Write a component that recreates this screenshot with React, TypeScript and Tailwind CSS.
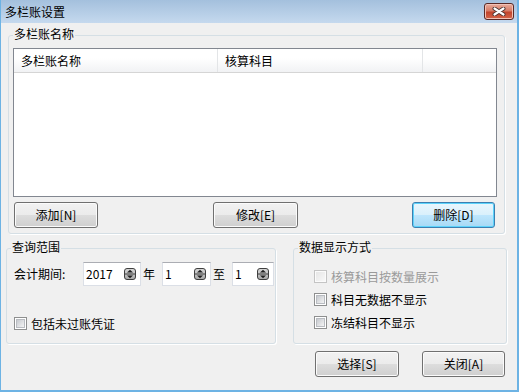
import React from "react"

const font = "font-['Noto_Sans_CJK_SC','Microsoft_YaHei',sans-serif]"

function Group({ title, className, children }: { title: string; className: string; children?: React.ReactNode }) {
  return (
    <div className={`relative box-border rounded-[3px] border border-[#d5dfe5] shadow-[1px_1px_0_#ffffff] ${className}`}>
      <span className="absolute left-[4px] top-[-10px] bg-[#f0f0f0] px-[1px] text-[12px] leading-[16px] text-black">
        {title}
      </span>
      {children}
    </div>
  )
}

function Button({ label, primary, className }: { label: string; primary?: boolean; className?: string }) {
  return (
    <button
      className={`box-border flex h-[26px] items-center justify-center rounded-[3px] border text-[12px] leading-none text-black ${
        primary
          ? "border-[#3c7fb1] bg-[linear-gradient(#eaf6fd_0%,#d9f0fc_50%,#bee6fd_50%,#a7d9f5_100%)] shadow-[inset_0_0_0_1px_#5cd3fb]"
          : "border-[#707070] bg-[linear-gradient(#f2f2f2_0%,#ebebeb_50%,#dddddd_50%,#cfcfcf_100%)] shadow-[inset_0_0_0_1px_#fbfbfb]"
      } ${className ?? ""}`}
    >
      {label}
    </button>
  )
}

function Check({ label, disabled }: { label: string; disabled?: boolean }) {
  return (
    <div className="flex h-[13px] items-center">
      <span
        className={`box-border flex h-[13px] w-[13px] items-center justify-center border ${
          disabled ? "border-[#c4c4c4] bg-[#fbfbfb]" : "border-[#8e8f8f] bg-white"
        }`}
      >
        <span
          className={`h-[9px] w-[9px] ${
            disabled
              ? "bg-[linear-gradient(135deg,#e6e6e6,#f8f8f8)]"
              : "bg-[linear-gradient(135deg,#c6c9ce,#f4f4f4)] border border-[#b9bcc1]"
          }`}
        />
      </span>
      <span className={`ml-[4px] text-[12px] leading-[16px] ${disabled ? "text-[#9a9a9a]" : "text-black"}`}>{label}</span>
    </div>
  )
}

function Spinner() {
  return (
    <svg width="12" height="12" viewBox="0 0 12 12">
      <defs>
        <linearGradient id="spin" x1="0" y1="0" x2="0" y2="1">
          <stop offset="0" stopColor="#d8d8d8" />
          <stop offset="1" stopColor="#a9a9a9" />
        </linearGradient>
      </defs>
      <rect x="0.5" y="0.5" width="11" height="11" rx="2.5" fill="url(#spin)" stroke="#3f3f3f" />
      <line x1="1" y1="6" x2="11" y2="6" stroke="#3f3f3f" />
      <polygon points="3,4.5 6,1.8 9,4.5" fill="#1e1e1e" />
      <polygon points="3,7.5 6,10.2 9,7.5" fill="#1e1e1e" />
    </svg>
  )
}

function SpinBox({ value, width }: { value: string; width: string }) {
  return (
    <div
      className={`box-border flex h-[24px] items-center justify-between border border-[#dbdfe6] border-t-[#abadb3] bg-white pl-[2px] pr-[4px] ${width}`}
    >
      <span className="text-[12px] leading-none text-black">{value}</span>
      <Spinner />
    </div>
  )
}

export default function App() {
  return (
    <div
      className={`box-border flex h-[392px] w-[519px] flex-col overflow-hidden border-b-2 border-l border-r-2 border-[#6db3e4] bg-[#f0f0f0] ${font}`}
    >
      {/* Title bar */}
      <div className="flex h-[23px] shrink-0 items-center justify-between bg-[linear-gradient(#a4c0dd,#c5d9ee)] pl-[4px] pr-[3px]">
        <span className="text-[12px] leading-none text-black">多栏账设置</span>
        <div className="flex h-[17px] w-[30px] items-center justify-center rounded-[3px] border border-[#5a2a26] bg-[linear-gradient(#e8ac9d_0%,#d77c66_45%,#c2452d_55%,#d4664a_100%)] shadow-[inset_0_0_0_1px_#f2c2b6]">
          <svg width="14" height="9" viewBox="0 0 14 9">
            <path d="M2.5 1.5 L11.5 7.5 M11.5 1.5 L2.5 7.5" stroke="#4a3330" strokeWidth="4" strokeLinecap="round" />
            <path d="M2.5 1.5 L11.5 7.5 M11.5 1.5 L2.5 7.5" stroke="#ffffff" strokeWidth="2.2" strokeLinecap="round" />
          </svg>
        </div>
      </div>

      {/* 多栏账名称 */}
      <Group title="多栏账名称" className="ml-[7px] mt-[12px] h-[199px] w-[497px]">
        <div className="ml-[4px] mt-[12px] box-border h-[149px] w-[484px] border border-[#828790] bg-white">
          <div className="flex h-[24px] border-b border-[#d5d5d5] bg-[linear-gradient(#ffffff_0%,#ffffff_40%,#f1f2f4_100%)] text-[12px] text-black">
            <div className="flex w-[204px] items-center border-r border-[#e3e5e7] pl-[7px]">多栏账名称</div>
            <div className="flex w-[205px] items-center border-r border-[#e3e5e7] pl-[7px]">核算科目</div>
            <div className="flex-1" />
          </div>
        </div>
        <div className="ml-[5px] mt-[5px] flex">
          <Button label="添加[N]" className="w-[84px]" />
          <Button label="修改[E]" className="ml-[115px] w-[85px]" />
          <Button label="删除[D]" primary className="ml-[114px] w-[83px]" />
        </div>
      </Group>

      <div className="mt-[14px] flex">
        {/* 查询范围 */}
        <Group title="查询范围" className="ml-[5px] h-[96px] w-[270px]">
          <div className="ml-[7px] mt-[13px] flex h-[24px] items-center text-[12px] text-black">
            <span className="w-[69px]">会计期间:</span>
            <SpinBox value="2017" width="w-[58px]" />
            <span className="ml-[2px] w-[12px]">年</span>
            <SpinBox value="1" width="ml-[7px] w-[49px]" />
            <span className="ml-[2px] w-[12px]">至</span>
            <SpinBox value="1" width="ml-[7px] w-[42px]" />
          </div>
          <div className="ml-[7px] mt-[31px]">
            <Check label="包括未过账凭证" />
          </div>
        </Group>

        {/* 数据显示方式 */}
        <Group title="数据显示方式" className="ml-[17px] h-[96px] w-[214px]">
          <div className="ml-[20px] mt-[21px] flex flex-col gap-[10px]">
            <Check label="核算科目按数量展示" disabled />
            <Check label="科目无数据不显示" />
            <Check label="冻结科目不显示" />
          </div>
        </Group>
      </div>

      <div className="mt-[7px] flex justify-end gap-[23px] pr-[12px]">
        <Button label="选择[S]" className="w-[84px]" />
        <Button label="关闭[A]" className="w-[83px]" />
      </div>
    </div>
  )
}
